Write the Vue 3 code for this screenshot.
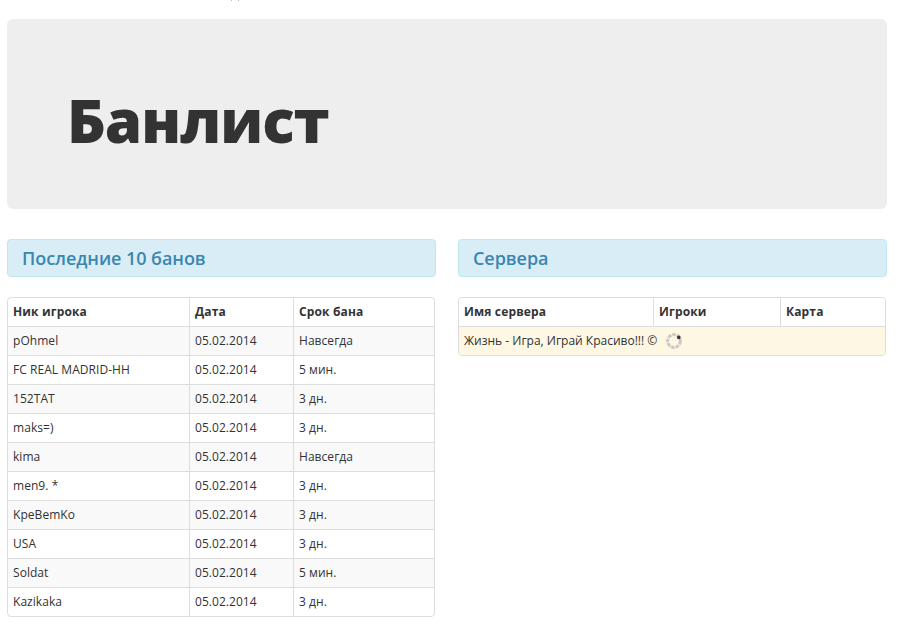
<template>
  <div class="page">
    <div class="top-cut"><i></i><i></i></div>
    <div class="jumbotron">
      <h1>Банлист</h1>
    </div>
    <div class="columns">
      <section class="col">
        <h3 class="col-title">Последние 10 банов</h3>
        <table class="grid bans">
          <thead>
            <tr>
              <th>Ник игрока</th>
              <th>Дата</th>
              <th>Срок бана</th>
            </tr>
          </thead>
          <tbody>
            <tr v-for="ban in bans" :key="ban.nick">
              <td>{{ ban.nick }}</td>
              <td>{{ ban.date }}</td>
              <td>{{ ban.term }}</td>
            </tr>
          </tbody>
        </table>
      </section>
      <section class="col">
        <h3 class="col-title">Сервера</h3>
        <table class="grid servers">
          <thead>
            <tr>
              <th>Имя сервера</th>
              <th>Игроки</th>
              <th>Карта</th>
            </tr>
          </thead>
          <tbody>
            <tr class="warning">
              <td colspan="3">
                <div class="server-row">
                  <span>Жизнь - Игра, Играй Красиво!!! ©</span>
                  <svg class="spinner" width="18" height="18" viewBox="0 0 18 18">
                    <circle cx="9" cy="9" r="6.4" fill="none" stroke="#c9c9c9" stroke-width="3" stroke-dasharray="3.6 1" />
                    <circle cx="13.8" cy="5.4" r="1.8" fill="#333" />
                  </svg>
                </div>
              </td>
            </tr>
          </tbody>
        </table>
      </section>
    </div>
  </div>
</template>

<script setup>
const bans = [
  { nick: 'pOhmel', date: '05.02.2014', term: 'Навсегда' },
  { nick: 'FC REAL MADRID-HH', date: '05.02.2014', term: '5 мин.' },
  { nick: '152TAT', date: '05.02.2014', term: '3 дн.' },
  { nick: 'maks=)', date: '05.02.2014', term: '3 дн.' },
  { nick: 'kima', date: '05.02.2014', term: 'Навсегда' },
  { nick: 'men9. *', date: '05.02.2014', term: '3 дн.' },
  { nick: 'KpeBemKo', date: '05.02.2014', term: '3 дн.' },
  { nick: 'USA', date: '05.02.2014', term: '3 дн.' },
  { nick: 'Soldat', date: '05.02.2014', term: '5 мин.' },
  { nick: 'Kazikaka', date: '05.02.2014', term: '3 дн.' }
]
</script>

<style>
html,
body {
  background: #fff;
}
</style>

<style scoped>
.page {
  width: 880px;
  padding: 0 35px 0 7px;
  font-family: "Open Sans", "Noto Sans", sans-serif;
  font-size: 12px;
  color: #333;
}

/* bottom edge of something scrolled off the top */
.top-cut {
  display: flex;
  gap: 6px;
  height: 19px;
  padding-left: 224px;
}

.top-cut i {
  width: 1px;
  height: 1px;
  background: #c9bfa8;
}

.top-cut i + i {
  background: #b9b3d8;
}

.jumbotron {
  height: 190px;
  box-sizing: border-box;
  padding: 63px 60px 0;
  background: #eee;
  border-radius: 6px;
}

.jumbotron h1 {
  margin: 0;
  font-size: 60px;
  font-weight: 800;
  line-height: 76px;
  letter-spacing: -1px;
  color: #333;
}

.columns {
  display: grid;
  grid-template-columns: 429px 429px;
  column-gap: 22px;
  margin-top: 30px;
}

.col-title {
  margin: 0 0 20px;
  height: 38px;
  box-sizing: border-box;
  padding-left: 14px;
  background: #d9edf7;
  border: 1px solid #bce8f1;
  border-radius: 4px;
  font-size: 18px;
  font-weight: 600;
  line-height: 36px;
  letter-spacing: -0.06px;
  color: #3a87ad;
}

.grid {
  width: 428px;
  table-layout: fixed;
  border-collapse: separate;
  border-spacing: 0;
  border: 1px solid #ddd;
  border-radius: 4px;
  overflow: hidden;
}

.grid th,
.grid td {
  height: 29px;
  box-sizing: border-box;
  padding: 0 5px;
  border-left: 1px solid #ddd;
  border-top: 1px solid #ddd;
  text-align: left;
  vertical-align: middle;
  line-height: 18px;
  letter-spacing: 0.05px;
  white-space: nowrap;
}

.grid th {
  height: 28px;
  border-top: 0;
  font-weight: 700;
  letter-spacing: 0.15px;
}

.grid th:first-child,
.grid td:first-child {
  border-left: 0;
}

.bans tbody tr:nth-child(odd) td {
  background: #f9f9f9;
}

.bans th:nth-child(1) {
  width: 181px;
}

.bans th:nth-child(2) {
  width: 104px;
}

.servers th:nth-child(1) {
  width: 194px;
}

.servers th:nth-child(2) {
  width: 127px;
}

.servers .warning td {
  background: #fdf7e3;
  letter-spacing: 0;
}

.server-row {
  display: flex;
  align-items: center;
  gap: 8px;
}

.spinner {
  flex: none;
}
</style>
